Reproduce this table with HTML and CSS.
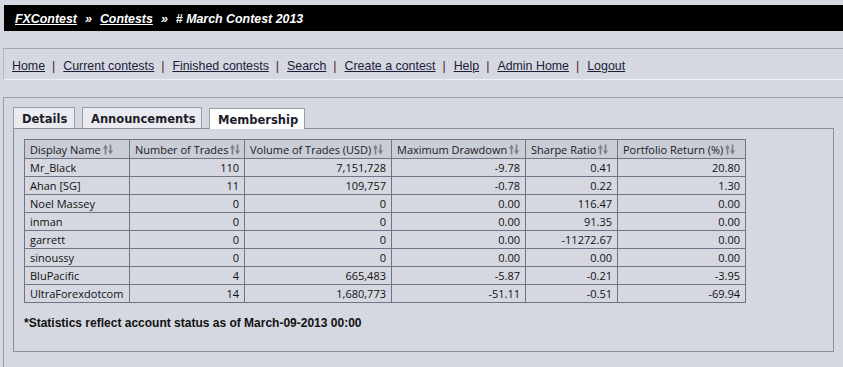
FILE: index.html
```html
<!DOCTYPE html>
<html>
<head>
<meta charset="utf-8">
<link rel="stylesheet" href="styles.css">
</head>
<body>
<div class="page">
  <div class="crumbs">
    <a href="#">FXContest</a><span class="raquo">»</span><a href="#">Contests</a><span class="raquo">»</span><span># March Contest 2013</span>
  </div>
  <div class="nav">
    <a href="#">Home</a><span class="sep">|</span><a href="#">Current contests</a><span class="sep">|</span><a href="#">Finished contests</a><span class="sep">|</span><a href="#">Search</a><span class="sep">|</span><a href="#">Create a contest</a><span class="sep">|</span><a href="#">Help</a><span class="sep">|</span><a href="#">Admin Home</a><span class="sep">|</span><a href="#">Logout</a>
  </div>
  <div class="content">
    <div class="tabs">
      <div class="tab t1">Details</div>
      <div class="tab t2">Announcements</div>
      <div class="tab t3 active">Membership</div>
    </div>
    <div class="panel">
      <table class="grid">
        <colgroup>
          <col class="c1"><col class="c2"><col class="c3"><col class="c4"><col class="c5"><col class="c6">
        </colgroup>
        <thead>
          <tr>
            <th>Display Name<svg class="sort" width="10" height="11" viewBox="0 0 10 11"><path d="M2.5 10.5V3.5M7.5 0.5v7" stroke="#7e8084" stroke-width="1.7"/><path d="M0 4.5L2.5 0.6L5 4.5ZM5 6.5L7.5 10.4L10 6.5Z" fill="#7e8084"/></svg></th>
            <th>Number of Trades<svg class="sort" width="10" height="11" viewBox="0 0 10 11"><path d="M2.5 10.5V3.5M7.5 0.5v7" stroke="#7e8084" stroke-width="1.7"/><path d="M0 4.5L2.5 0.6L5 4.5ZM5 6.5L7.5 10.4L10 6.5Z" fill="#7e8084"/></svg></th>
            <th>Volume of Trades (USD)<svg class="sort" width="10" height="11" viewBox="0 0 10 11"><path d="M2.5 10.5V3.5M7.5 0.5v7" stroke="#7e8084" stroke-width="1.7"/><path d="M0 4.5L2.5 0.6L5 4.5ZM5 6.5L7.5 10.4L10 6.5Z" fill="#7e8084"/></svg></th>
            <th>Maximum Drawdown<svg class="sort" width="10" height="11" viewBox="0 0 10 11"><path d="M2.5 10.5V3.5M7.5 0.5v7" stroke="#7e8084" stroke-width="1.7"/><path d="M0 4.5L2.5 0.6L5 4.5ZM5 6.5L7.5 10.4L10 6.5Z" fill="#7e8084"/></svg></th>
            <th>Sharpe Ratio<svg class="sort" width="10" height="11" viewBox="0 0 10 11"><path d="M2.5 10.5V3.5M7.5 0.5v7" stroke="#7e8084" stroke-width="1.7"/><path d="M0 4.5L2.5 0.6L5 4.5ZM5 6.5L7.5 10.4L10 6.5Z" fill="#7e8084"/></svg></th>
            <th>Portfolio Return (%)<svg class="sort" width="10" height="11" viewBox="0 0 10 11"><path d="M2.5 10.5V3.5M7.5 0.5v7" stroke="#7e8084" stroke-width="1.7"/><path d="M0 4.5L2.5 0.6L5 4.5ZM5 6.5L7.5 10.4L10 6.5Z" fill="#7e8084"/></svg></th>
          </tr>
        </thead>
        <tbody>
          <tr><td>Mr_Black</td><td class="n">110</td><td class="n">7,151,728</td><td class="n">-9.78</td><td class="n">0.41</td><td class="n">20.80</td></tr>
          <tr><td>Ahan [SG]</td><td class="n">11</td><td class="n">109,757</td><td class="n">-0.78</td><td class="n">0.22</td><td class="n">1.30</td></tr>
          <tr><td>Noel Massey</td><td class="n">0</td><td class="n">0</td><td class="n">0.00</td><td class="n">116.47</td><td class="n">0.00</td></tr>
          <tr><td>inman</td><td class="n">0</td><td class="n">0</td><td class="n">0.00</td><td class="n">91.35</td><td class="n">0.00</td></tr>
          <tr><td>garrett</td><td class="n">0</td><td class="n">0</td><td class="n">0.00</td><td class="n">-11272.67</td><td class="n">0.00</td></tr>
          <tr><td>sinoussy</td><td class="n">0</td><td class="n">0</td><td class="n">0.00</td><td class="n">0.00</td><td class="n">0.00</td></tr>
          <tr><td>BluPacific</td><td class="n">4</td><td class="n">665,483</td><td class="n">-5.87</td><td class="n">-0.21</td><td class="n">-3.95</td></tr>
          <tr><td>UltraForexdotcom</td><td class="n">14</td><td class="n">1,680,773</td><td class="n">-51.11</td><td class="n">-0.51</td><td class="n">-69.94</td></tr>
        </tbody>
      </table>
      <p class="note">*Statistics reflect account status as of March-09-2013 00:00</p>
    </div>
  </div>
</div>
</body>
</html>
```

FILE: styles.css
```css
html, body {
  margin: 0;
  padding: 0;
  background: #d5d8e0;
}
body {
  font-family: "Liberation Sans", Arial, sans-serif;
  overflow: hidden;
}
.page {
  padding: 5px 0 0 3px;
}
.crumbs {
  margin-left: 1px;
  height: 26px;
  background: #000;
  color: #fff;
  font-size: 12.4px;
  font-weight: bold;
  font-style: italic;
  display: flex;
  align-items: center;
  padding: 1px 0 0 11px;
  box-sizing: border-box;
}
.crumbs a {
  color: #fff;
  text-decoration: underline;
}
.raquo {
  margin: 0 8px 0 8px;
}
.nav {
  margin-top: 17px;
  height: 32px;
  box-sizing: border-box;
  border-top: 1px solid #a2a6ae;
  border-left: 1px solid #b4b8c0;
  border-bottom: 1px solid #eef0f4;
  display: flex;
  align-items: center;
  padding: 3px 0 0 8px;
  font-size: 12.4px;
}
.nav a {
  color: #1c1c3a;
  text-decoration: underline;
}
.sep {
  color: #4a2232;
  margin: 0 8px 0 7px;
}
.content {
  margin-top: 17px;
  border-top: 1px solid #9a9ea6;
  border-left: 1px solid #9a9ea6;
  padding: 9px 9px 20px 9px;
}
.tabs {
  display: flex;
  align-items: flex-end;
  gap: 7px;
  height: 21px;
}
.tab {
  height: 21px;
  box-sizing: border-box;
  border: 1px solid #9a9ea6;
  border-bottom: none;
  background: #e9ebf0;
  font-family: "DejaVu Sans", Verdana, sans-serif;
  font-weight: bold;
  font-size: 11.5px;
  color: #1c1c2c;
  display: flex;
  align-items: center;
  padding: 1px 8px 0 8px;
}
.t1 { width: 62px; }
.t2 { width: 120px; }
.t3 { width: 96px; }
.tab.active {
  background: #fff;
  height: 21px;
  position: relative;
  top: 1px;
  z-index: 1;
}
.panel {
  border: 1px solid #8c9098;
  height: 224px;
  box-sizing: border-box;
  padding: 10px 10px;
}
.grid {
  border-collapse: collapse;
  table-layout: fixed;
  width: 721px;
  font-family: "Open Sans", "Noto Sans", sans-serif;
  font-size: 11px;
  color: #111;
}
.c1 { width: 105px; }
.c2 { width: 115px; }
.c3 { width: 147px; }
.c4 { width: 134px; }
.c5 { width: 92px; }
.c6 { width: 128px; }
.grid th, .grid td {
  border: 1px solid #6f7384;
  padding: 0 4px 0 5px;
  white-space: nowrap;
  overflow: hidden;
}
.grid th {
  height: 18px;
  background: #c9cdd6;
  font-weight: normal;
  text-align: left;
  color: #1a1a24;
}
.grid td {
  height: 17px;
  line-height: 16px;
}
.grid td.n {
  text-align: right;
  padding-right: 5px;
}
.sort {
  vertical-align: -1px;
  margin-left: 2px;
}
.note {
  margin: 13px 0 0 0;
  font-size: 12px;
  font-weight: bold;
  color: #111;
}
```
